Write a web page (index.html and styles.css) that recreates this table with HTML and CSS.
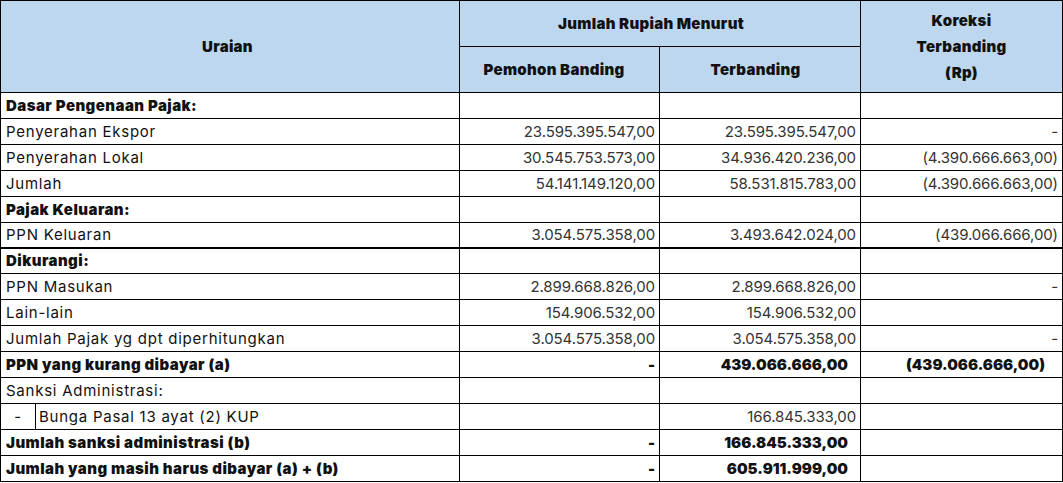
FILE: index.html
```html
<!DOCTYPE html>
<html lang="id">
<head>
<meta charset="utf-8">
<title>Tabel Koreksi PPN</title>
<link rel="stylesheet" href="styles.css">
</head>
<body>
<table class="tbl">
  <colgroup>
    <col class="c-dash">
    <col class="c-label">
    <col class="c-num">
    <col class="c-num2">
    <col class="c-kor">
  </colgroup>
  <thead>
    <tr class="hrow">
      <th colspan="2" rowspan="2" class="h-uraian">Uraian</th>
      <th colspan="2" class="h-jumlah">Jumlah Rupiah Menurut</th>
      <th rowspan="2" class="h-kor">Koreksi<br>Terbanding<br>(Rp)</th>
    </tr>
    <tr class="hrow">
      <th class="h-pemohon">Pemohon Banding</th>
      <th class="h-terb">Terbanding</th>
    </tr>
  </thead>
  <tbody>
    <tr class="bold"><td colspan="2" class="lbl">Dasar Pengenaan Pajak:</td><td></td><td></td><td></td></tr>
    <tr><td colspan="2" class="lbl">Penyerahan Ekspor</td><td class="num">23.595.395.547,00</td><td class="num">23.595.395.547,00</td><td class="num">-</td></tr>
    <tr><td colspan="2" class="lbl">Penyerahan Lokal</td><td class="num">30.545.753.573,00</td><td class="num">34.936.420.236,00</td><td class="num">(4.390.666.663,00)</td></tr>
    <tr><td colspan="2" class="lbl">Jumlah</td><td class="num">54.141.149.120,00</td><td class="num">58.531.815.783,00</td><td class="num">(4.390.666.663,00)</td></tr>
    <tr class="bold"><td colspan="2" class="lbl">Pajak Keluaran:</td><td></td><td></td><td></td></tr>
    <tr class="thick"><td colspan="2" class="lbl">PPN Keluaran</td><td class="num">3.054.575.358,00</td><td class="num">3.493.642.024,00</td><td class="num">(439.066.666,00)</td></tr>
    <tr class="bold short"><td colspan="2" class="lbl">Dikurangi:</td><td></td><td></td><td></td></tr>
    <tr><td colspan="2" class="lbl">PPN Masukan</td><td class="num">2.899.668.826,00</td><td class="num">2.899.668.826,00</td><td class="num">-</td></tr>
    <tr><td colspan="2" class="lbl">Lain-lain</td><td class="num">154.906.532,00</td><td class="num">154.906.532,00</td><td class="num"></td></tr>
    <tr><td colspan="2" class="lbl">Jumlah Pajak yg dpt diperhitungkan</td><td class="num">3.054.575.358,00</td><td class="num">3.054.575.358,00</td><td class="num">-</td></tr>
    <tr class="bold"><td colspan="2" class="lbl">PPN yang kurang dibayar (a)</td><td class="num">-</td><td class="num pad">439.066.666,00</td><td class="num kpad">(439.066.666,00)</td></tr>
    <tr><td colspan="2" class="lbl">Sanksi Administrasi:</td><td></td><td></td><td></td></tr>
    <tr><td class="dash">-</td><td class="lbl sub">Bunga Pasal 13 ayat (2) KUP</td><td></td><td class="num">166.845.333,00</td><td></td></tr>
    <tr class="bold"><td colspan="2" class="lbl">Jumlah sanksi administrasi (b)</td><td class="num">-</td><td class="num pad">166.845.333,00</td><td></td></tr>
    <tr class="bold"><td colspan="2" class="lbl">Jumlah yang masih harus dibayar (a) + (b)</td><td class="num">-</td><td class="num pad">605.911.999,00</td><td></td></tr>
  </tbody>
</table>
</body>
</html>
```

FILE: styles.css
```css
html, body {
  margin: 0;
  padding: 0;
  background: #ffffff;
}

.tbl {
  border-collapse: collapse;
  table-layout: fixed;
  width: 1062px;
  font-family: Inter, "Liberation Sans", sans-serif;
  color: #111111;
}

.c-dash { width: 35px; }
.c-label { width: 424px; }
.c-num { width: 200px; }
.c-num2 { width: 201px; }
.c-kor { width: 202px; }

.tbl th,
.tbl td {
  border: 1px solid #000000;
  padding: 0;
  white-space: nowrap;
  overflow: hidden;
}

.tbl th {
  background: #bdd7ee;
  font-weight: 900;
  font-size: 15px;
  letter-spacing: 0.3px;
  text-align: center;
  height: 45px;
  line-height: 26px;
}

.tbl th.h-uraian { padding-right: 5px; }
.tbl th.h-jumlah { padding-right: 18px; }
.tbl th.h-pemohon { padding-right: 11px; }
.tbl th.h-terb { padding-right: 9px; }

.tbl td {
  height: 25px;
  font-size: 15px;
  letter-spacing: 0.75px;
  line-height: 25px;
}

.tbl td.lbl {
  padding-left: 5px;
  text-align: left;
}

.tbl td.lbl.sub {
  padding-left: 3px;
}

.tbl td.num {
  text-align: right;
  padding-right: 4px;
  color: #333333;
  letter-spacing: -0.1px;
}

.tbl .bold td {
  font-weight: 900;
  letter-spacing: 0.45px;
}

.tbl .bold td.num {
  color: #111111;
  letter-spacing: 0;
}

.tbl td.num.pad {
  padding-right: 12px;
}

.tbl td.num.kpad {
  padding-right: 17px;
}

.tbl td.dash {
  text-align: center;
}

.tbl .thick td {
  border-bottom-width: 2px;
  height: 24px;
  line-height: 24px;
}

.tbl .short td {
  height: 24px;
  line-height: 24px;
}
```
